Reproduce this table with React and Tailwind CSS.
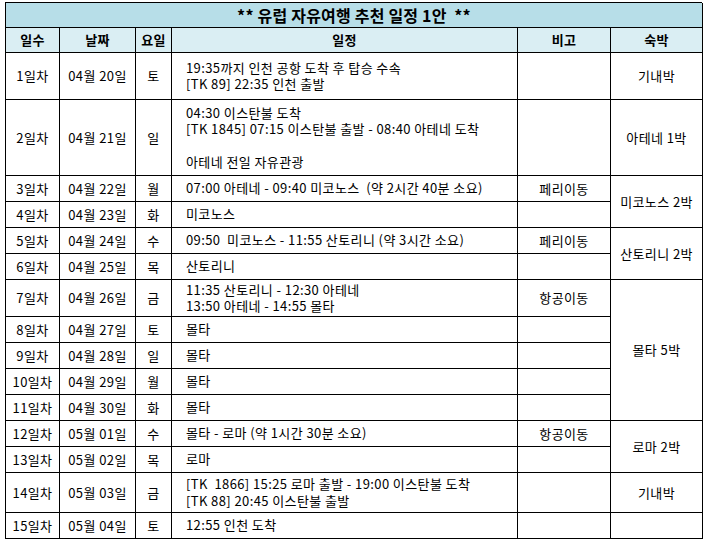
import React from "react";

const rows = [
  { d: "1일차", date: "04월 20일", w: "토", s: ["19:35까지 인천 공항 도착 후 탑승 수속", "[TK 89] 22:35 인천 출발"], b: "", h: "h-[47px]" },
  { d: "2일차", date: "04월 21일", w: "일", s: ["04:30 이스탄불 도착", "[TK 1845] 07:15 이스탄불 출발 - 08:40 아테네 도착", "", "아테네 전일 자유관광"], b: "", h: "h-[76px]" },
  { d: "3일차", date: "04월 22일", w: "월", s: ["07:00 아테네 - 09:40 미코노스  (약 2시간 40분 소요)"], b: "페리이동", h: "h-[26px]" },
  { d: "4일차", date: "04월 23일", w: "화", s: ["미코노스"], b: "", h: "h-[26px]" },
  { d: "5일차", date: "04월 24일", w: "수", s: ["09:50  미코노스 - 11:55 산토리니 (약 3시간 소요)"], b: "페리이동", h: "h-[26px]" },
  { d: "6일차", date: "04월 25일", w: "목", s: ["산토리니"], b: "", h: "h-[26px]" },
  { d: "7일차", date: "04월 26일", w: "금", s: ["11:35 산토리니 - 12:30 아테네", "13:50 아테네 - 14:55 몰타"], b: "항공이동", h: "h-[37px]" },
  { d: "8일차", date: "04월 27일", w: "토", s: ["몰타"], b: "", h: "h-[26px]" },
  { d: "9일차", date: "04월 28일", w: "일", s: ["몰타"], b: "", h: "h-[26px]" },
  { d: "10일차", date: "04월 29일", w: "월", s: ["몰타"], b: "", h: "h-[26px]" },
  { d: "11일차", date: "04월 30일", w: "화", s: ["몰타"], b: "", h: "h-[26px]" },
  { d: "12일차", date: "05월 01일", w: "수", s: ["몰타 - 로마 (약 1시간 30분 소요)"], b: "항공이동", h: "h-[26px]" },
  { d: "13일차", date: "05월 02일", w: "목", s: ["로마"], b: "", h: "h-[26px]" },
  { d: "14일차", date: "05월 03일", w: "금", s: ["[TK  1866] 15:25 로마 출발 - 19:00 이스탄불 도착", "[TK 88] 20:45 이스탄불 출발"], b: "", h: "h-[40px]" },
  { d: "15일차", date: "05월 04일", w: "토", s: ["12:55 인천 도착"], b: "", h: "h-[26px]" },
];

const stays = {
  0: { t: "기내박", span: "" },
  1: { t: "아테네 1박", span: "" },
  2: { t: "미코노스 2박", span: "row-span-2" },
  4: { t: "산토리니 2박", span: "row-span-2" },
  6: { t: "몰타 5박", span: "row-span-5" },
  11: { t: "로마 2박", span: "row-span-2" },
  13: { t: "기내박", span: "" },
  14: { t: "", span: "" },
};

const cell = "border-r border-b border-black bg-white flex items-center";

export default function App() {
  return (
    <div
      className="w-[704px] h-[542px] bg-white pt-[2px] pl-[5px] text-[13px] tracking-[0.4px] text-black"
      style={{ fontFamily: '"Noto Sans CJK KR", "Noto Sans", sans-serif' }}
    >
      <div className="grid w-[697px] grid-cols-[54px_76px_36px_346px_93px_92px] border-l border-t border-black">
        <div className="col-span-6 h-[25px] border-r border-b border-black bg-[#b7dee8] flex items-center justify-center font-bold text-[16px] tracking-[0.2px] whitespace-pre">
          {"** 유럽 자유여행 추천 일정 1안  **"}
        </div>
        {["일수", "날짜", "요일", "일정", "비고", "숙박"].map((h) => (
          <div key={h} className="h-[25px] border-r border-b border-black bg-[#daeef3] flex items-center justify-center font-bold">
            {h}
          </div>
        ))}
        {rows.map((r, i) => (
          <React.Fragment key={i}>
            <div className={`${cell} ${r.h} justify-center`}>{r.d}</div>
            <div className={`${cell} justify-center`}>{r.date}</div>
            <div className={`${cell} justify-center`}>{r.w}</div>
            <div className={`${cell} pl-[14px]`}>
              <div className="flex flex-col leading-[16.5px] whitespace-pre">
                {r.s.map((l, j) => (
                  <div key={j} className="h-[16.5px]">{l}</div>
                ))}
              </div>
            </div>
            <div className={`${cell} justify-center`}>{r.b}</div>
            {stays[i] && (
              <div className={`${cell} justify-center ${stays[i].span}`}>{stays[i].t}</div>
            )}
          </React.Fragment>
        ))}
      </div>
    </div>
  );
}
